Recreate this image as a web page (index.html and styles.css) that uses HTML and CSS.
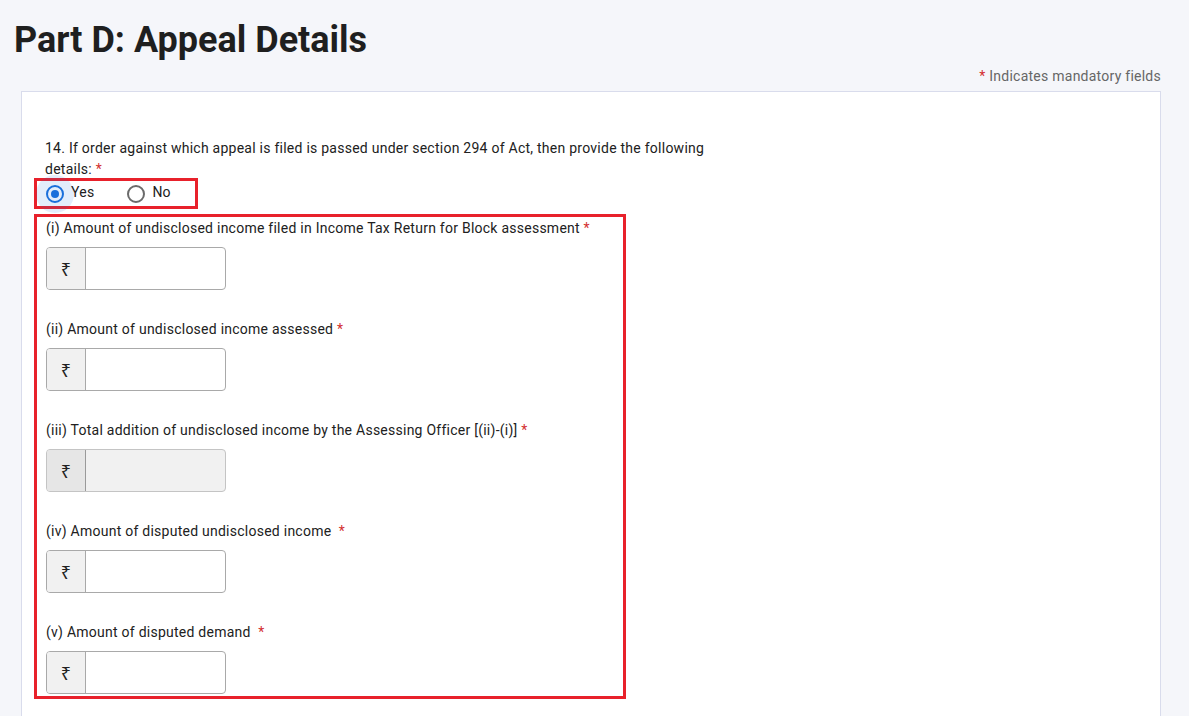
FILE: index.html
```html
<!DOCTYPE html>
<html lang="en">
<head>
<meta charset="utf-8">
<title>Part D: Appeal Details</title>
<link rel="stylesheet" href="styles.css">
</head>
<body>
<div class="page">
  <h1 class="page-title">Part D: Appeal Details</h1>
  <p class="mandatory-note"><span class="req">*</span> Indicates mandatory fields</p>

  <section class="card">
    <p class="question">14. If order against which appeal is filed is passed under section 294 of Act, then provide the following details: <span class="req">*</span></p>

    <div class="radio-group highlight">
      <label class="radio checked"><span class="radio-dot"></span><span>Yes</span></label>
      <label class="radio"><span class="radio-dot"></span><span>No</span></label>
    </div>

    <div class="fields highlight">
      <div class="field">
        <div class="field-label">(i) Amount of undisclosed income filed in Income Tax Return for Block assessment <span class="req">*</span></div>
        <div class="amount-input"><span class="prefix">₹</span><span class="value"></span></div>
      </div>
      <div class="field">
        <div class="field-label">(ii) Amount of undisclosed income assessed <span class="req">*</span></div>
        <div class="amount-input"><span class="prefix">₹</span><span class="value"></span></div>
      </div>
      <div class="field">
        <div class="field-label">(iii) Total addition of undisclosed income by the Assessing Officer [(ii)-(i)] <span class="req">*</span></div>
        <div class="amount-input disabled"><span class="prefix">₹</span><span class="value"></span></div>
      </div>
      <div class="field">
        <div class="field-label">(iv) Amount of disputed undisclosed income &nbsp;<span class="req">*</span></div>
        <div class="amount-input"><span class="prefix">₹</span><span class="value"></span></div>
      </div>
      <div class="field">
        <div class="field-label">(v) Amount of disputed demand &nbsp;<span class="req">*</span></div>
        <div class="amount-input"><span class="prefix">₹</span><span class="value"></span></div>
      </div>
    </div>
  </section>
</div>
</body>
</html>
```

FILE: styles.css
```css
* { box-sizing: border-box; }

html, body {
  margin: 0;
  background: #f5f6fa;
  font-family: Roboto, "Noto Sans", "DejaVu Sans", sans-serif;
  color: #212121;
}

.page {
  padding: 19px 28px 0 21px;
}

.page-title {
  margin: 0 0 0 -7px;
  font-size: 36px;
  line-height: 42px;
  font-weight: 700;
  color: #1f1f1f;
}

.mandatory-note {
  margin: 5px 0 5px;
  text-align: right;
  font-size: 14px;
  line-height: 20px;
  letter-spacing: 0.25px;
  color: #666;
}

.req { color: #d32f2f; }

.card {
  background: #fff;
  border: 1px solid #d9dcec;
  padding: 46px 23px 40px;
  min-height: 700px;
  font-size: 14px;
  letter-spacing: 0.25px;
}

.question {
  margin: 0;
  max-width: 680px;
  line-height: 21px;
}

.highlight {
  border: 3px solid #e8212b;
  margin-left: -11px;
}

.radio-group {
  position: relative;
  z-index: 0;
  width: 164px;
  height: 31px;
  margin-top: -2px;
  display: flex;
  align-items: center;
  gap: 33px;
  padding-left: 9px;
  line-height: 16px;
}

.radio {
  display: flex;
  align-items: center;
  gap: 7px;
}

.radio span:last-child {
  margin-top: -3px;
}

.radio-dot {
  width: 18px;
  height: 18px;
  border: 2px solid #6b6b6b;
  border-radius: 50%;
  position: relative;
  flex: none;
}

.radio.checked .radio-dot {
  border-color: #1a6fdb;
}

/* inner dot of the selected option */
.radio.checked .radio-dot::after {
  content: "";
  position: absolute;
  inset: 3px;
  border-radius: 50%;
  background: #1a6fdb;
}

/* focus ripple around the selected option */
.radio.checked .radio-dot::before {
  content: "";
  position: absolute;
  left: -12px;
  top: -12px;
  width: 38px;
  height: 38px;
  border-radius: 50%;
  background: rgba(26, 111, 219, 0.12);
  z-index: -1;
}

.fields {
  width: 592px;
  margin-top: 5px;
  padding: 1px 9px 2px;
  display: flex;
  flex-direction: column;
  gap: 29px;
}

.field-label {
  line-height: 20px;
  margin-bottom: 9px;
}

.amount-input {
  width: 180px;
  height: 43px;
  display: flex;
  border: 1px solid #a9a9a9;
  border-radius: 4px;
  overflow: hidden;
  background: #fff;
}

.prefix {
  width: 39px;
  flex: none;
  display: flex;
  align-items: center;
  justify-content: center;
  background: #f1f1f1;
  border-right: 1px solid #a9a9a9;
  font-family: "Noto Sans", "DejaVu Sans", sans-serif;
  font-size: 18px;
  color: #222;
}

.value { flex: 1; }

.amount-input.disabled {
  background: #f1f1f1;
  border-color: #c4c4c4;
}

.amount-input.disabled .prefix {
  background: #e6e6e6;
  border-right-color: #9a9a9a;
}
```
